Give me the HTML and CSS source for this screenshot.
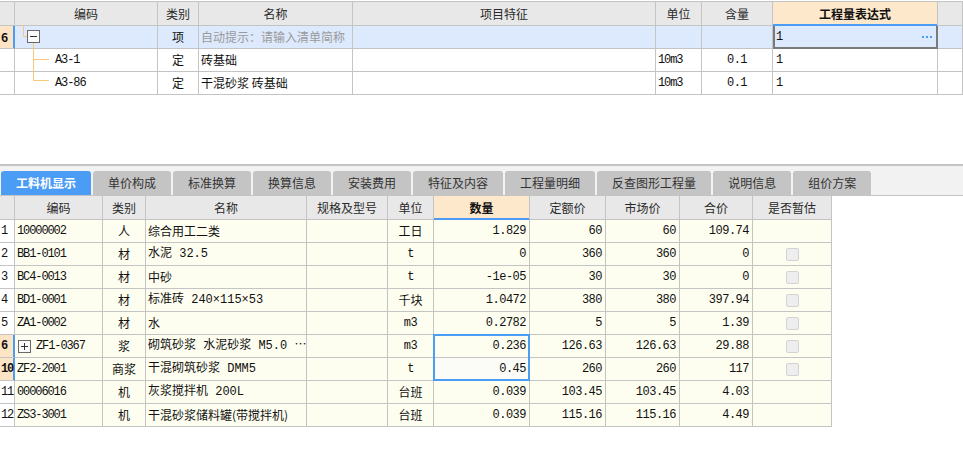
FILE: index.html
```html
<!DOCTYPE html>
<html lang="zh-CN">
<head>
<meta charset="utf-8">
<title>工料机显示</title>
<link rel="stylesheet" href="styles.css">
</head>
<body>
<section class="bill">
  <div class="brow head">
    <div class="c"></div>
    <div class="c">编码</div>
    <div class="c">类别</div>
    <div class="c">名称</div>
    <div class="c">项目特征</div>
    <div class="c">单位</div>
    <div class="c">含量</div>
    <div class="c hl">工程量表达式</div>
    <div class="c"></div>
  </div>
  <div class="brow sel">
    <div class="c num cur">6</div>
    <div class="c tree-root"><span class="toggle minus"></span></div>
    <div class="c ctr">项</div>
    <div class="c hint">自动提示：请输入清单简称</div>
    <div class="c"></div>
    <div class="c"></div>
    <div class="c"></div>
    <div class="c expr edit"><span class="m">1</span><span class="dots"><i></i><i></i><i></i></span></div>
    <div class="c"></div>
  </div>
  <div class="brow">
    <div class="c num"></div>
    <div class="c m code tree-leaf">A3-1</div>
    <div class="c ctr">定</div>
    <div class="c">砖基础</div>
    <div class="c"></div>
    <div class="c m code">10m3</div>
    <div class="c m ctr">0.1</div>
    <div class="c m expr">1</div>
    <div class="c"></div>
  </div>
  <div class="brow">
    <div class="c num"></div>
    <div class="c m code tree-leaf">A3-86</div>
    <div class="c ctr">定</div>
    <div class="c">干混砂浆 砖基础</div>
    <div class="c"></div>
    <div class="c m code">10m3</div>
    <div class="c m ctr">0.1</div>
    <div class="c m expr">1</div>
    <div class="c"></div>
  </div>
  <svg class="tree" width="60" height="96" viewBox="0 0 60 96" aria-hidden="true">
    <path d="M23.5 25 V36.5 H27" fill="none" stroke="#f8c777" stroke-width="1"/>
    <path d="M33.5 43 V80.5 M33.5 59.5 H49 M33.5 80.5 H49" fill="none" stroke="#f8c777" stroke-width="1"/>
  </svg>
</section>

<nav class="tabbar">
  <div class="tab on">工料机显示</div>
  <div class="tab">单价构成</div>
  <div class="tab">标准换算</div>
  <div class="tab">换算信息</div>
  <div class="tab">安装费用</div>
  <div class="tab">特征及内容</div>
  <div class="tab">工程量明细</div>
  <div class="tab">反查图形工程量</div>
  <div class="tab">说明信息</div>
  <div class="tab">组价方案</div>
</nav>

<section class="mat">
  <div class="mrow head">
    <div class="c"></div>
    <div class="c">编码</div>
    <div class="c">类别</div>
    <div class="c">名称</div>
    <div class="c">规格及型号</div>
    <div class="c">单位</div>
    <div class="c hl">数量</div>
    <div class="c">定额价</div>
    <div class="c">市场价</div>
    <div class="c">合价</div>
    <div class="c">是否暂估</div>
  </div>
  <div class="mrow">
    <div class="c num m">1</div><div class="c m code">10000002</div><div class="c ctr">人</div><div class="c">综合用工二类</div><div class="c"></div><div class="c ctr">工日</div>
    <div class="c m r">1.829</div><div class="c m r">60</div><div class="c m r">60</div><div class="c m r">109.74</div><div class="c"></div>
  </div>
  <div class="mrow">
    <div class="c num m">2</div><div class="c m code">BB1-0101</div><div class="c ctr">材</div><div class="c nm">水泥 32.5</div><div class="c"></div><div class="c m ctr">t</div>
    <div class="c m r">0</div><div class="c m r">360</div><div class="c m r">360</div><div class="c m r">0</div><div class="c box"><span class="cb"></span></div>
  </div>
  <div class="mrow">
    <div class="c num m">3</div><div class="c m code">BC4-0013</div><div class="c ctr">材</div><div class="c">中砂</div><div class="c"></div><div class="c m ctr">t</div>
    <div class="c m r">-1e-05</div><div class="c m r">30</div><div class="c m r">30</div><div class="c m r">0</div><div class="c box"><span class="cb"></span></div>
  </div>
  <div class="mrow">
    <div class="c num m">4</div><div class="c m code">BD1-0001</div><div class="c ctr">材</div><div class="c nm">标准砖 240×115×53</div><div class="c"></div><div class="c ctr">千块</div>
    <div class="c m r">1.0472</div><div class="c m r">380</div><div class="c m r">380</div><div class="c m r">397.94</div><div class="c box"><span class="cb"></span></div>
  </div>
  <div class="mrow">
    <div class="c num m">5</div><div class="c m code">ZA1-0002</div><div class="c ctr">材</div><div class="c">水</div><div class="c"></div><div class="c m ctr">m3</div>
    <div class="c m r">0.2782</div><div class="c m r">5</div><div class="c m r">5</div><div class="c m r">1.39</div><div class="c box"><span class="cb"></span></div>
  </div>
  <div class="mrow">
    <div class="c num m cur">6</div><div class="c m code grp"><span class="toggle plus"></span>ZF1-0367</div><div class="c ctr">浆</div><div class="c nm">砌筑砂浆 水泥砂浆 M5.0 ⋯</div><div class="c"></div><div class="c m ctr">m3</div>
    <div class="c m r">0.236</div><div class="c m r">126.63</div><div class="c m r">126.63</div><div class="c m r">29.88</div><div class="c box"><span class="cb"></span></div>
  </div>
  <div class="mrow">
    <div class="c num m cur">10</div><div class="c m code">ZF2-2001</div><div class="c ctr">商浆</div><div class="c nm">干混砌筑砂浆 DMM5</div><div class="c"></div><div class="c m ctr">t</div>
    <div class="c m r editing">0.45</div><div class="c m r">260</div><div class="c m r">260</div><div class="c m r">117</div><div class="c box"><span class="cb"></span></div>
  </div>
  <div class="mrow">
    <div class="c num m">11</div><div class="c m code">00006016</div><div class="c ctr">机</div><div class="c nm">灰浆搅拌机 200L</div><div class="c"></div><div class="c ctr">台班</div>
    <div class="c m r">0.039</div><div class="c m r">103.45</div><div class="c m r">103.45</div><div class="c m r">4.03</div><div class="c"></div>
  </div>
  <div class="mrow">
    <div class="c num m">12</div><div class="c m code">ZS3-3001</div><div class="c ctr">机</div><div class="c">干混砂浆储料罐(带搅拌机)</div><div class="c"></div><div class="c ctr">台班</div>
    <div class="c m r">0.039</div><div class="c m r">115.16</div><div class="c m r">115.16</div><div class="c m r">4.49</div><div class="c"></div>
  </div>
  <div class="selbox"></div>
</section>
</body>
</html>
```

FILE: styles.css
```css
* { box-sizing: border-box; }
html, body { margin: 0; padding: 0; }
body {
  width: 963px;
  height: 451px;
  overflow: hidden;
  background: #fff;
  font-family: "Noto Sans CJK SC", "Noto Sans", sans-serif;
  font-size: 12px;
  color: #111;
}

/* shared cell */
.c {
  border-right: 1px solid #c4c4c4;
  border-bottom: 1px solid #c4c4c4;
  line-height: 22px;
  padding: 0 2px;
  white-space: nowrap;
  overflow: hidden;
}
.ctr { text-align: center; }
.r { text-align: right; padding-right: 3px; }
.m { font-family: "Liberation Mono", "Noto Sans CJK SC", monospace; letter-spacing: -0.5px; }
.m.code { letter-spacing: -1.1px; }
.nm { font-family: "Liberation Mono", "Noto Sans CJK SC", monospace; }
.hint { color: #9a9a9a; }

.head .c {
  background: #e8e8e8;
  text-align: center;
  line-height: 23px;
  color: #2a2a2a;
}
.head .c.hl {
  background: #fee8cb;
  font-weight: bold;
  color: #111;
  border-bottom-color: #4a9cf5;
  box-shadow: inset 0 -1px #4a9cf5;
}

.num { padding: 0 0 0 1px; letter-spacing: -1.1px; }
.num.cur {
  background: #fde4c4;
  font-weight: bold;
  border-right-color: #4a9cf5;
  box-shadow: inset -1px 0 #4a9cf5;
}

/* upper bill grid */
.bill {
  position: relative;
  margin-top: 1px;
  border-top: 1px solid #c4c4c4;
}
.brow {
  display: grid;
  grid-template-columns: 15px 143px 41px 154px 303px 46px 71px 165px 25px;
  height: 23px;
}
.brow.head { height: 24px; }
.brow.sel .c { background: #dde9fc; }
.brow.sel .c.num { background: #fde4c4; }
.expr { padding-left: 3px; }
.tree-root { padding-left: 12px; display: flex; align-items: center; }
.tree-leaf { padding-left: 40px; }
.edit {
  display: flex;
  align-items: center;
  justify-content: space-between;
  padding-right: 5px;
  border-right-color: #7a7a7a;
  border-bottom-color: #7a7a7a;
  box-shadow: inset 2px 0 #7a7a7a, inset -1px 0 #7a7a7a, inset 0 -1px #7a7a7a;
}
.dots { display: flex; gap: 2px; }
.dots i { display: block; width: 2px; height: 2px; background: #4a9cf5; }
.tree { position: absolute; left: 0; top: -2px; }

.toggle {
  display: inline-block;
  position: relative;
  width: 13px;
  height: 13px;
  border: 1px solid #6a6a6a;
  background: #fafafa;
  vertical-align: middle;
}
.toggle::before {
  content: "";
  position: absolute;
  left: 2px;
  top: 5px;
  width: 7px;
  height: 1px;
  background: #333;
}
.toggle.plus::after {
  content: "";
  position: absolute;
  left: 5px;
  top: 2px;
  width: 1px;
  height: 7px;
  background: #333;
}
.tree-root .toggle { margin-top: -2px; }

/* tabs */
.tabbar {
  display: flex;
  gap: 2px;
  height: 32px;
  margin-top: 69px;
  padding: 5px 0 0 1px;
  background: #f2f2f2;
  border-top: 2px solid #c4c4c4;
  border-bottom: 1px solid #c4c4c4;
}
.tab {
  height: 24px;
  line-height: 24px;
  padding: 0 15px;
  background: #c4c4c4;
  color: #333;
  border-radius: 3px 3px 0 0;
  white-space: nowrap;
}
.tab.on {
  background: #4a9cf5;
  color: #fff;
  font-weight: bold;
}

/* lower material grid */
.mat { position: relative; width: 832px; }
.mrow {
  display: grid;
  grid-template-columns: 15px 88px 43px 161px 81px 46px 96px 76px 74px 73px 79px;
  height: 23px;
  background: #fefef0;
}
.mrow.head { height: 24px; }
.mrow .num { background: #fff; }
.mrow .num.cur { background: #fde4c4; }
.grp { padding-left: 3px; display: flex; align-items: center; gap: 5px; }
.editing { background: #fbfbf7; }
.box { display: flex; align-items: center; justify-content: center; }
.cb {
  display: block;
  width: 13px;
  height: 13px;
  border: 1px solid #d3d3d3;
  border-radius: 2px;
  background: #eeeeee;
}
.selbox {
  position: absolute;
  left: 433px;
  top: 138px;
  width: 97px;
  height: 47px;
  border: 2px solid #4a9cf5;
  pointer-events: none;
}
```
